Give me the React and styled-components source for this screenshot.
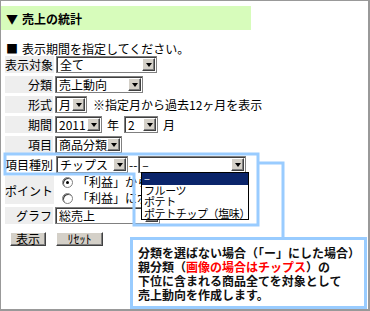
import React from 'react'
import styled, { createGlobalStyle } from 'styled-components'

const GlobalStyle = createGlobalStyle`
  body {
    margin: 0;
    background: #fff;
    font-family: "MS UI Gothic", "Noto Sans CJK JP", sans-serif;
    font-size: 12px;
    color: #000;
  }
`

const Frame = styled.div`
  position: relative;
  box-sizing: border-box;
  width: 370px;
  height: 311px;
  padding-top: 5px;
  border-style: solid;
  border-color: #999;
  border-width: 1px 2px 2px 1px;
  overflow: hidden;
`

const Header = styled.div`
  width: 250px;
  height: 24px;
  padding-left: 5px;
  box-sizing: border-box;
  display: flex;
  align-items: center;
  gap: 4px;
  background: #d7fcbb;
  font-weight: bold;
  font-size: 12px;
`

const Note = styled.div`
  margin: 12px 0 0 5px;
  line-height: 14px;
  display: flex;
  gap: 4px;
`

const Form = styled.div`
  display: flex;
  flex-direction: column;
  gap: 3px;
  padding-left: 4px;
`

const Row = styled.div`
  display: flex;
  align-items: stretch;
  gap: 2px;
  min-height: 17px;
`

const Label = styled.div`
  flex: 0 0 47px;
  display: flex;
  align-items: center;
  justify-content: flex-end;
  padding-right: 1px;
  background: ${({ $plain }) => ($plain ? 'transparent' : '#eeeeee')};
  white-space: nowrap;
`

const Field = styled.div`
  display: flex;
  align-items: center;
  gap: ${({ $gap }) => $gap ?? 6}px;
  white-space: nowrap;
`

const SelectBox = styled.div`
  box-sizing: border-box;
  display: flex;
  align-items: center;
  width: ${({ $w }) => $w}px;
  height: 17px;
  padding: 0 1px 0 3px;
  background: #fff;
  border: 1px solid #808080;
  box-shadow: inset 1px 1px 0 #404040;
`

const SelectText = styled.span`
  flex: 1;
  min-width: 0;
  overflow: hidden;
  white-space: nowrap;
  line-height: 15px;
`

const ArrowButton = styled.span`
  box-sizing: border-box;
  flex: 0 0 13px;
  height: 13px;
  display: flex;
  align-items: center;
  justify-content: center;
  background: #d4d0c8;
  border: 1px solid;
  border-color: #fff #404040 #404040 #fff;
  box-shadow: inset -1px -1px 0 #808080;

  &::after {
    content: '';
    border-left: 3.5px solid transparent;
    border-right: 3.5px solid transparent;
    border-top: 4px solid #000;
  }
`

const RadioList = styled.div`
  width: 80px;
  overflow: hidden;
  display: flex;
  flex-direction: column;
  justify-content: center;
  gap: 4px;
  padding-left: 6px;
  white-space: nowrap;
`

const RadioLine = styled.div`
  display: flex;
  align-items: center;
  gap: 4px;
  line-height: 12px;
`

const Radio = styled.span`
  box-sizing: border-box;
  flex: 0 0 11px;
  height: 11px;
  border-radius: 50%;
  border: 1px solid #808080;
  box-shadow: inset 1px 1px 0 #404040;
  background: #fff;
  display: flex;
  align-items: center;
  justify-content: center;

  &::after {
    content: '';
    width: 3px;
    height: 3px;
    border-radius: 50%;
    background: ${({ $checked }) => ($checked ? '#000' : 'transparent')};
  }
`

const Buttons = styled.div`
  display: flex;
  gap: 10px;
  margin: 8px 0 0 9px;
`

const Button = styled.span`
  box-sizing: border-box;
  width: ${({ $w }) => $w}px;
  height: 14px;
  display: flex;
  align-items: center;
  justify-content: center;
  font-size: 12px;
  line-height: 12px;
  white-space: nowrap;
  background: #d4d0c8;
  border: 1px solid;
  border-color: #fff #404040 #404040 #fff;
  box-shadow: inset -1px -1px 0 #808080;
`

const Marks = styled.svg`
  position: absolute;
  left: 0;
  top: 0;
  pointer-events: none;
`

const DropList = styled.ul`
  position: absolute;
  left: 140px;
  top: 171px;
  width: 108px;
  margin: 0;
  padding: 0;
  list-style: none;
  box-sizing: border-box;
  background: #fff;
  border: 1px solid #000;
`

const DropItem = styled.li`
  height: 11.5px;
  line-height: 11.5px;
  font-size: 11px;
  letter-spacing: -0.4px;
  padding-left: 2px;
  overflow: hidden;
  white-space: nowrap;
  background: ${({ $active }) => ($active ? '#0a246a' : 'transparent')};
  color: ${({ $active }) => ($active ? '#fff' : '#000')};
`

const Callout = styled.div`
  position: absolute;
  left: 129px;
  top: 236px;
  width: 237px;
  height: 72px;
  box-sizing: border-box;
  padding: 6px 0 0 5px;
  background: #fff;
  border: 3px solid #99ccff;
  font-weight: bold;
  line-height: 14px;
  color: #111;
  white-space: nowrap;
`

const Red = styled.span`
  color: #ff0000;
`

const Select = ({ w, children }) => (
  <SelectBox $w={w}>
    <SelectText>{children}</SelectText>
    <ArrowButton />
  </SelectBox>
)

export default function App() {
  return (
    <>
      <GlobalStyle />
      <Frame>
        <Header>
          <span>▼</span>
          <span>売上の統計</span>
        </Header>
        <Note>
          <span>■</span>
          <span>表示期間を指定してください。</span>
        </Note>
        <Form>
          <Row>
            <Label>表示対象</Label>
            <Field>
              <Select w={101}>全て</Select>
            </Field>
          </Row>
          <Row>
            <Label>分類</Label>
            <Field>
              <Select w={88}>売上動向</Select>
            </Field>
          </Row>
          <Row>
            <Label>形式</Label>
            <Field>
              <Select w={32}>月</Select>
              <span>※指定月から過去12ヶ月を表示</span>
            </Field>
          </Row>
          <Row>
            <Label>期間</Label>
            <Field $gap={5}>
              <Select w={47}>2011</Select>
              <span>年</span>
              <Select w={34}>2</Select>
              <span>月</span>
            </Field>
          </Row>
          <Row>
            <Label>項目</Label>
            <Field>
              <Select w={67}>商品分類</Select>
            </Field>
          </Row>
          <Row>
            <Label $plain>項目種別</Label>
            <Field $gap={1}>
              <Select w={72}>チップス</Select>
              <span>--</span>
              <Select w={108}>–</Select>
            </Field>
          </Row>
          <Row>
            <Label>ポイント</Label>
            <RadioList>
              <RadioLine>
                <Radio $checked />
                <span>「利益」から「粗利益」を表示</span>
              </RadioLine>
              <RadioLine>
                <Radio />
                <span>「利益」にポイントを含める</span>
              </RadioLine>
            </RadioList>
          </Row>
          <Row>
            <Label>グラフ</Label>
            <Field>
              <Select w={105}>総売上</Select>
            </Field>
          </Row>
        </Form>
        <Buttons>
          <Button $w={36}>表示</Button>
          <Button $w={47}>ﾘｾｯﾄ</Button>
        </Buttons>

        <Marks width="370" height="311">
          <polygon
            points="4,153 257,153 257,224 133,224 133,173 4,173"
            fill="none"
            stroke="#99ccff"
            strokeWidth="3"
          />
          <polyline
            points="257,162 282,162 282,238"
            fill="none"
            stroke="#99ccff"
            strokeWidth="3"
          />
        </Marks>

        <DropList>
          <DropItem $active>–</DropItem>
          <DropItem>フルーツ</DropItem>
          <DropItem>ポテト</DropItem>
          <DropItem>ポテトチップ（塩味）</DropItem>
        </DropList>

        <Callout>
          分類を選ばない場合（「ー」にした場合）
          <br />
          親分類（<Red>画像の場合はチップス</Red>）の
          <br />
          下位に含まれる商品全てを対象として
          <br />
          売上動向を作成します。
        </Callout>
      </Frame>
    </>
  )
}
